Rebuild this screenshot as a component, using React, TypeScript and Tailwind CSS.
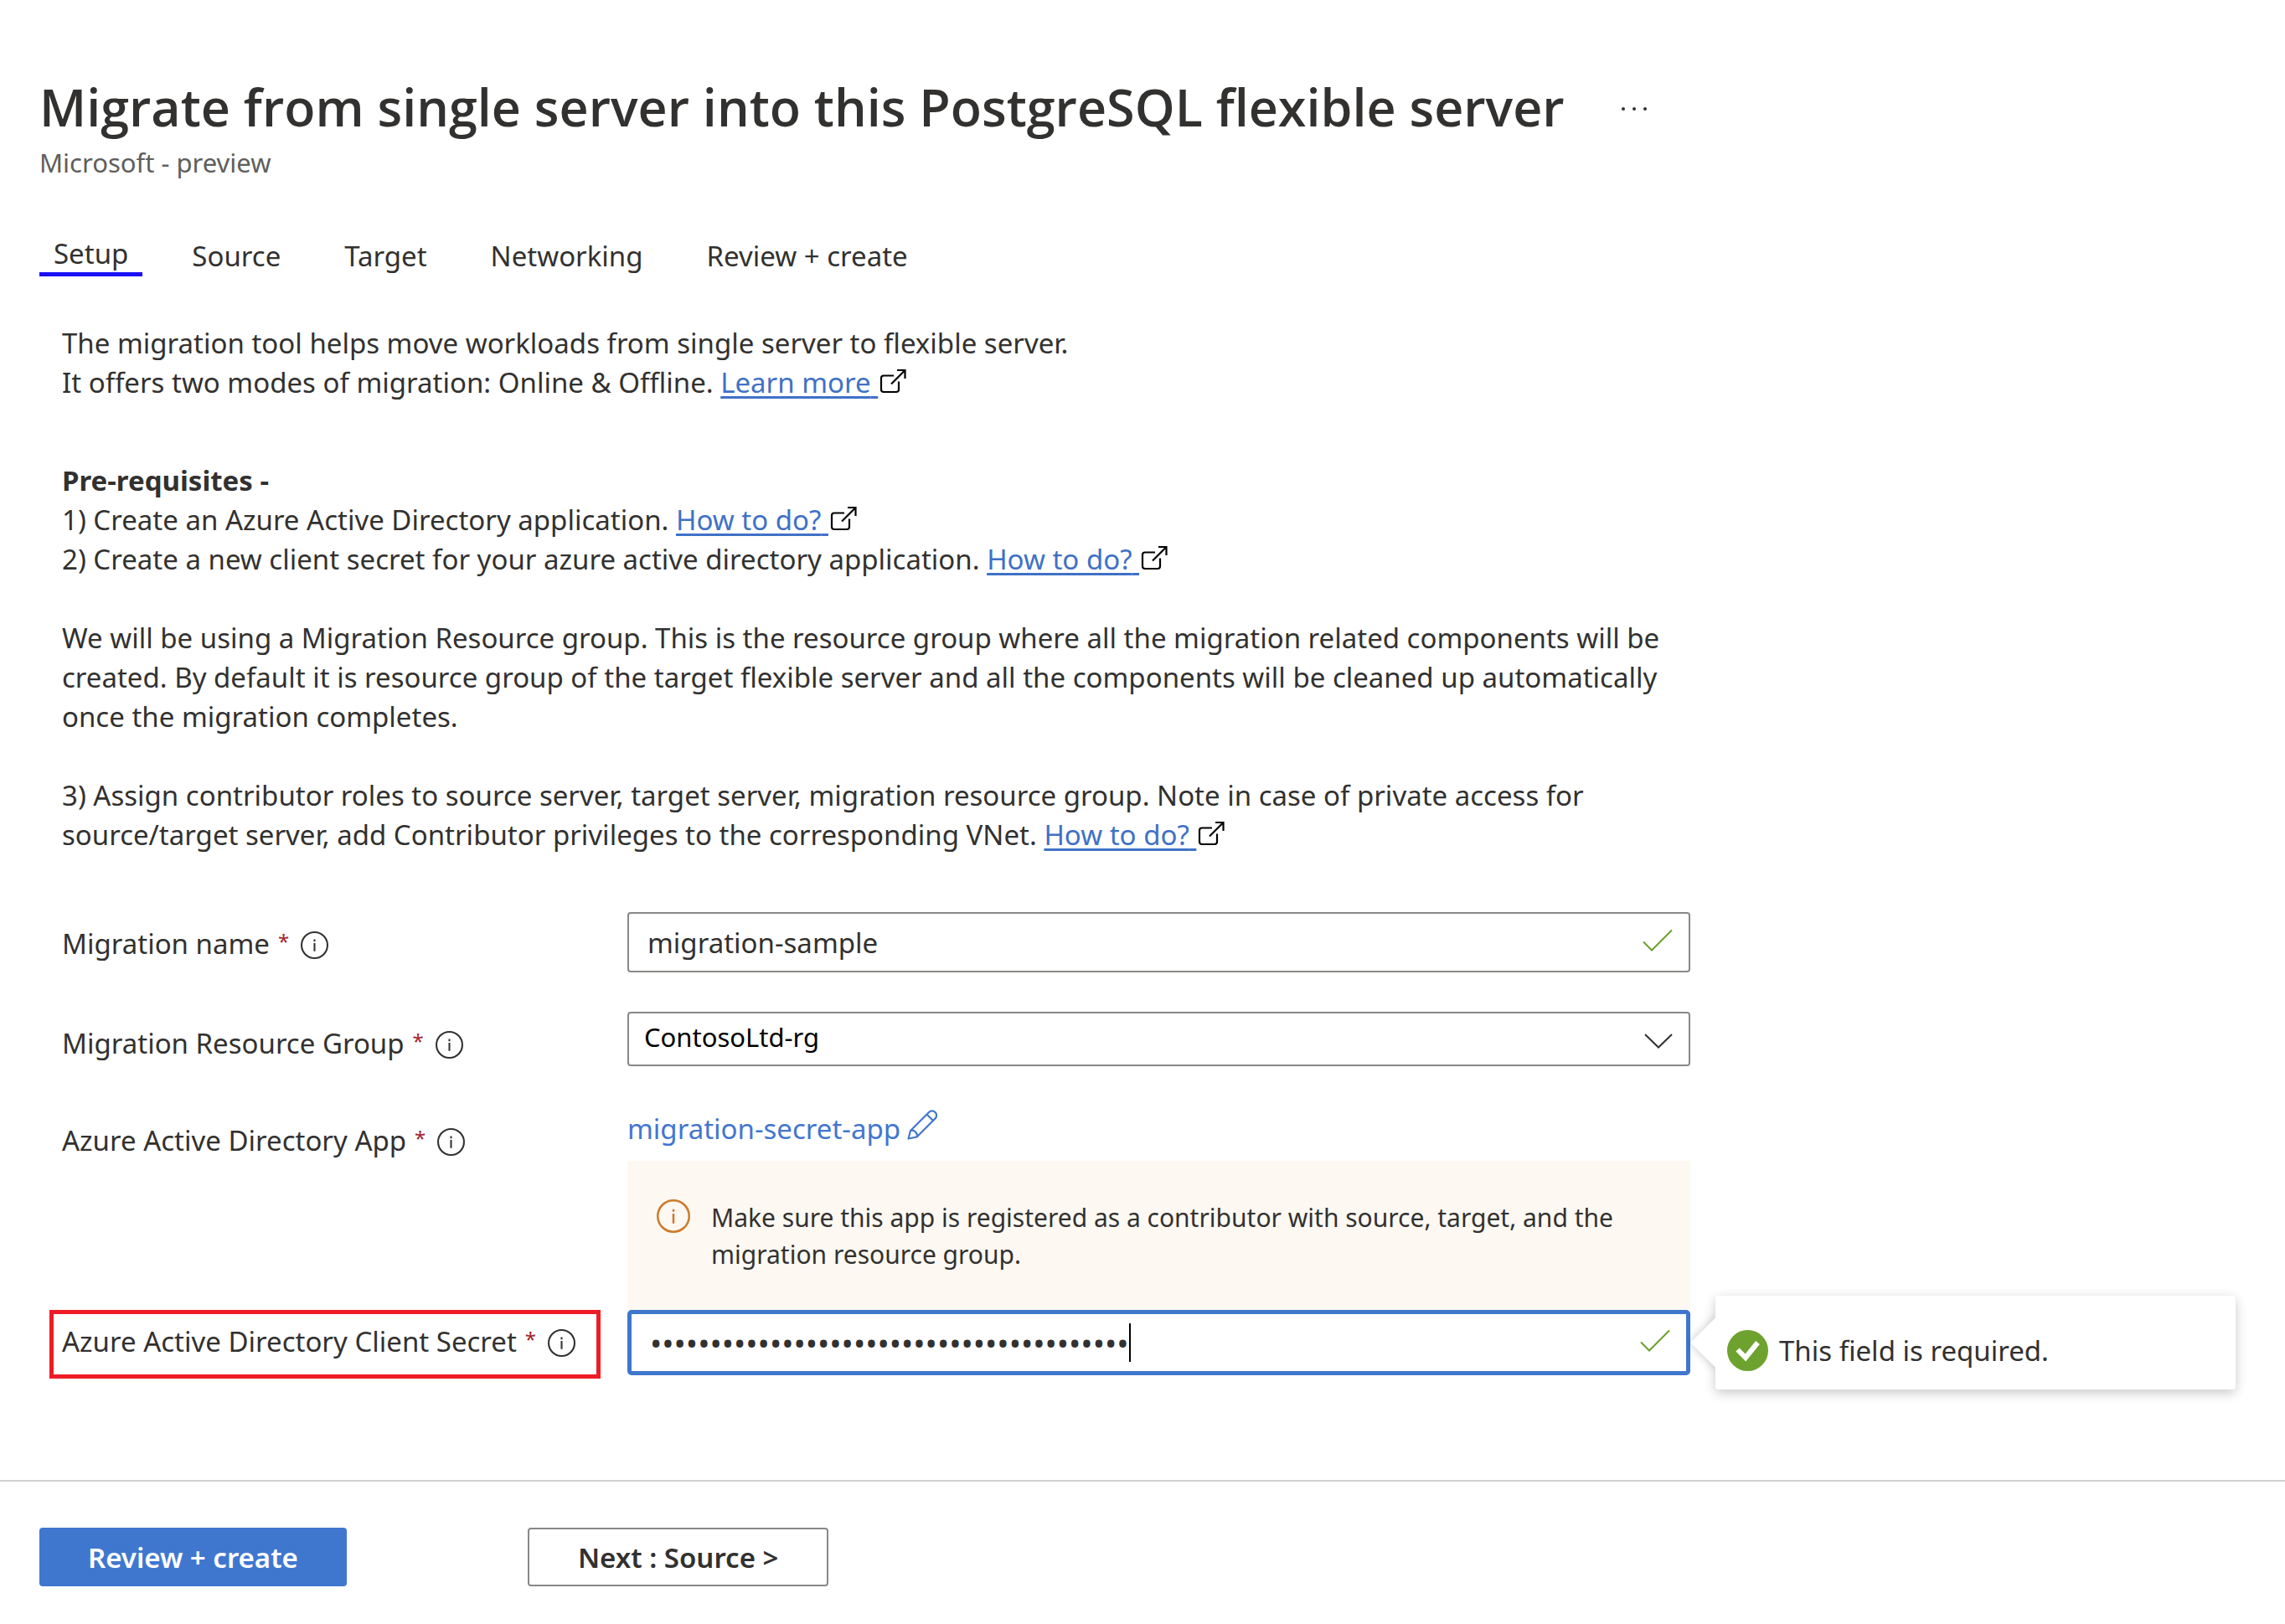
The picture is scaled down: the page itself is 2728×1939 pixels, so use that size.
import React, { type ReactNode } from "react";

const tabs = ["Setup", "Source", "Target", "Networking", "Review + create"];

function ExternalIcon() {
  return (
    <svg className="ml-[2px] inline-block h-[30px] w-[32px] align-[-1px]" viewBox="0 0 32 30" fill="none" stroke="#000" strokeWidth="2.200" aria-hidden="true">
      <path d="M17 8.500H5a3 3 0 0 0-3 3V25a3 3 0 0 0 3 3h15a3 3 0 0 0 3-3V15.500" />
      <path d="M14 18.500L30 2.500M21 2h9.500v10" />
    </svg>
  );
}

function DocLink({ children }: { children: ReactNode }) {
  return (
    <>
      <a href="#" className="whitespace-pre text-[#3f71c6] underline decoration-[3px] underline-offset-[4px]">
        {children}{" "}
      </a>
      <ExternalIcon />
    </>
  );
}

function InfoIcon({ className }: { className: string }) {
  return (
    <svg className={className} viewBox="0 0 32 32" fill="none" stroke="currentColor" strokeWidth="2" aria-hidden="true">
      <circle cx="16" cy="16" r="15" />
      <path d="M16 13.500V23M16 9.300v2.500" />
    </svg>
  );
}

function CheckIcon() {
  return (
    <svg className="mb-[4px] h-[28px] w-[36px] shrink-0" viewBox="0 0 36 28" fill="none" stroke="#6aa02c" strokeWidth="2" aria-hidden="true">
      <path d="M1 15.500L11 25.500L35 1.500" />
    </svg>
  );
}

function FieldLabel({ htmlFor, text }: { htmlFor: string; text: string }) {
  return (
    <label htmlFor={htmlFor} className="flex items-center">
      {text}
      <span className="ml-[10px] self-start text-[24px] leading-[42px] text-[#a4262c]">*</span>
      <InfoIcon className="ml-[14px] mt-[4px] size-[33px] shrink-0" />
    </label>
  );
}

export default function App() {
  return (
    <main className="min-h-screen bg-white pt-[88px] font-['Noto_Sans','Open_Sans',sans-serif] text-[33px] leading-[47px] text-[#323130]">
      <header className="px-[47px]">
        <div className="flex items-center gap-[68px]">
          <h1 className="font-['Open_Sans','Noto_Sans',sans-serif] text-[61px] leading-[80px] font-semibold">
            Migrate from single server into this PostgreSQL flexible server
          </h1>
          <button type="button" aria-label="More" className="flex gap-[9px] pt-[4px]">
            <span className="size-[4px] rounded-full bg-[#323130]" />
            <span className="size-[4px] rounded-full bg-[#323130]" />
            <span className="size-[4px] rounded-full bg-[#323130]" />
          </button>
        </div>
        <p className="mt-[6px] text-[31px] leading-[40px] text-[#605e5c]">Microsoft - preview</p>
      </header>

      <nav role="tablist" className="mt-[66px] flex h-[50px] gap-[42px] px-[47px]">
        {tabs.map((t, i) => (
          <button
            key={t}
            type="button"
            role="tab"
            aria-selected={i === 0}
            className={i === 0 ? "border-b-[5px] border-[#1b10f5] px-[17px] leading-[45px]" : "px-[17px] pt-[2px] leading-[48px]"}
          >
            {t}
          </button>
        ))}
      </nav>

      <section className="mt-[56px] max-w-[2018px] pl-[74px]">
        <p>The migration tool helps move workloads from single server to flexible server.</p>
        <p>
          It offers two modes of migration: Online &amp; Offline. <DocLink>Learn more</DocLink>
        </p>
        <h2 className="mt-[70px] font-bold">Pre-requisites -</h2>
        <p>
          1) Create an Azure Active Directory application. <DocLink>How to do?</DocLink>
        </p>
        <p>
          2) Create a new client secret for your azure active directory application. <DocLink>How to do?</DocLink>
        </p>
        <p className="mt-[47px]">
          We will be using a Migration Resource group. This is the resource group where all the migration related components will be created. By default it is resource
          group of the target flexible server and all the components will be cleaned up automatically once the migration completes.
        </p>
        <p className="mt-[47px]">
          3) Assign contributor roles to source server, target server, migration resource group. Note in case of private access for source/target server, add
          Contributor privileges to the corresponding VNet. <DocLink>How to do?</DocLink>
        </p>
      </section>

      <form className="mt-[69px] grid grid-cols-[675px_minmax(0,1269px)] pl-[74px]">
        <div className="pt-[14px]">
          <FieldLabel htmlFor="name" text="Migration name" />
        </div>
        <div className="mb-[47px] flex h-[72px] items-center rounded-[4px] border-2 border-[#8a8886] pr-[19px] pl-[22px]">
          <input id="name" type="text" defaultValue="migration-sample" className="min-w-0 flex-1 outline-none" />
          <CheckIcon />
        </div>

        <div className="pt-[14px]">
          <FieldLabel htmlFor="group" text="Migration Resource Group" />
        </div>
        <div className="relative mb-[51px] h-[65px]">
          <select id="group" className="h-full w-full appearance-none rounded-[4px] border-2 border-[#8a8886] bg-white pb-[6px] pl-[18px] text-[31px] leading-[40px] text-black outline-none">
            <option>ContosoLtd-rg</option>
          </select>
          <svg className="pointer-events-none absolute top-[26px] right-[21px] h-[18px] w-[34px]" viewBox="0 0 34 18" fill="none" stroke="#323130" strokeWidth="2" aria-hidden="true">
            <path d="M1 1L17 16.500L33 1" />
          </svg>
        </div>

        <div className="pt-[14px]">
          <FieldLabel htmlFor="app" text="Azure Active Directory App" />
        </div>
        <div>
          <button id="app" type="button" className="flex w-fit items-center gap-[8px] text-[#4276cf]">
            migration-secret-app
            <svg className="mb-[10px] size-[36px]" viewBox="0 0 36 36" fill="none" stroke="#4276cf" strokeWidth="2.200" strokeLinejoin="round" aria-hidden="true">
              <path d="M1.500 34.500L4 25L26 3a5.300 5.300 0 0 1 7.500 7.500L11.500 32.500Z" />
              <path d="M4 25a6 6 0 0 1 7.500 7.500M23.500 5.500l7.500 7.500" />
            </svg>
          </button>
          <div className="mt-[15px] flex gap-[25px] bg-[#fdf8f2] pt-[46px] pr-[40px] pb-[44px] pl-[35px]">
            <InfoIcon className="size-[40px] shrink-0 text-[#cd7a2b]" />
            <p className="text-[30px] leading-[44px]">
              Make sure this app is registered as a contributor with source, target, and the migration resource group.
            </p>
          </div>
        </div>

        <div className="-ml-[15px] w-[658px] self-start border-[5px] border-[#ee1c25] pt-[9px] pb-[16px] pl-[10px]">
          <FieldLabel htmlFor="secret" text="Azure Active Directory Client Secret" />
        </div>
        <div className="relative flex h-[78px] items-center rounded-[5px] border-[5px] border-[#3f77cd] pr-[19px] pl-[22px]">
          <input
            id="secret"
            type="password"
            defaultValue="0123456789012345678901234567890123456789"
            className="[field-sizing:content] text-[38px] leading-[60px] outline-none"
          />
          <span className="h-[46px] w-[2px] bg-black" />
          <span className="flex-1" />
          <CheckIcon />
          <div role="tooltip" className="absolute top-[-22px] left-full ml-[35px] h-[112px] w-[621px] rounded-[4px] shadow-[0_4px_14px_rgba(0,0,0,0.22)]">
            <span className="absolute top-[35px] -left-[21px] size-[42px] rotate-45 bg-white shadow-[0_0_12px_rgba(0,0,0,0.22)]" />
            <div className="relative flex h-full items-center gap-[13px] rounded-[4px] bg-white pt-[18px] pl-[14px]">
              <svg className="size-[49px] shrink-0" viewBox="0 0 49 49" fill="none" aria-hidden="true">
                <circle cx="24.500" cy="24.500" r="24.500" fill="#6ea22f" />
                <path d="M12.500 23.500L22 33L36.500 15" stroke="#fff" strokeWidth="6" />
              </svg>
              <span>This field is required.</span>
            </div>
          </div>
        </div>
      </form>

      <footer className="mt-[121px] flex gap-[216px] border-t-2 border-[#d0d0d0] px-[47px] pt-[55px] pb-[45px] font-semibold">
        <button type="button" className="h-[70px] rounded-[4px] bg-[#3f77cf] px-[58px] text-white">
          Review + create
        </button>
        <button type="button" className="h-[70px] rounded-[4px] border-2 border-[#8a8886] px-[58px]">
          Next : Source &gt;
        </button>
      </footer>
    </main>
  );
}
